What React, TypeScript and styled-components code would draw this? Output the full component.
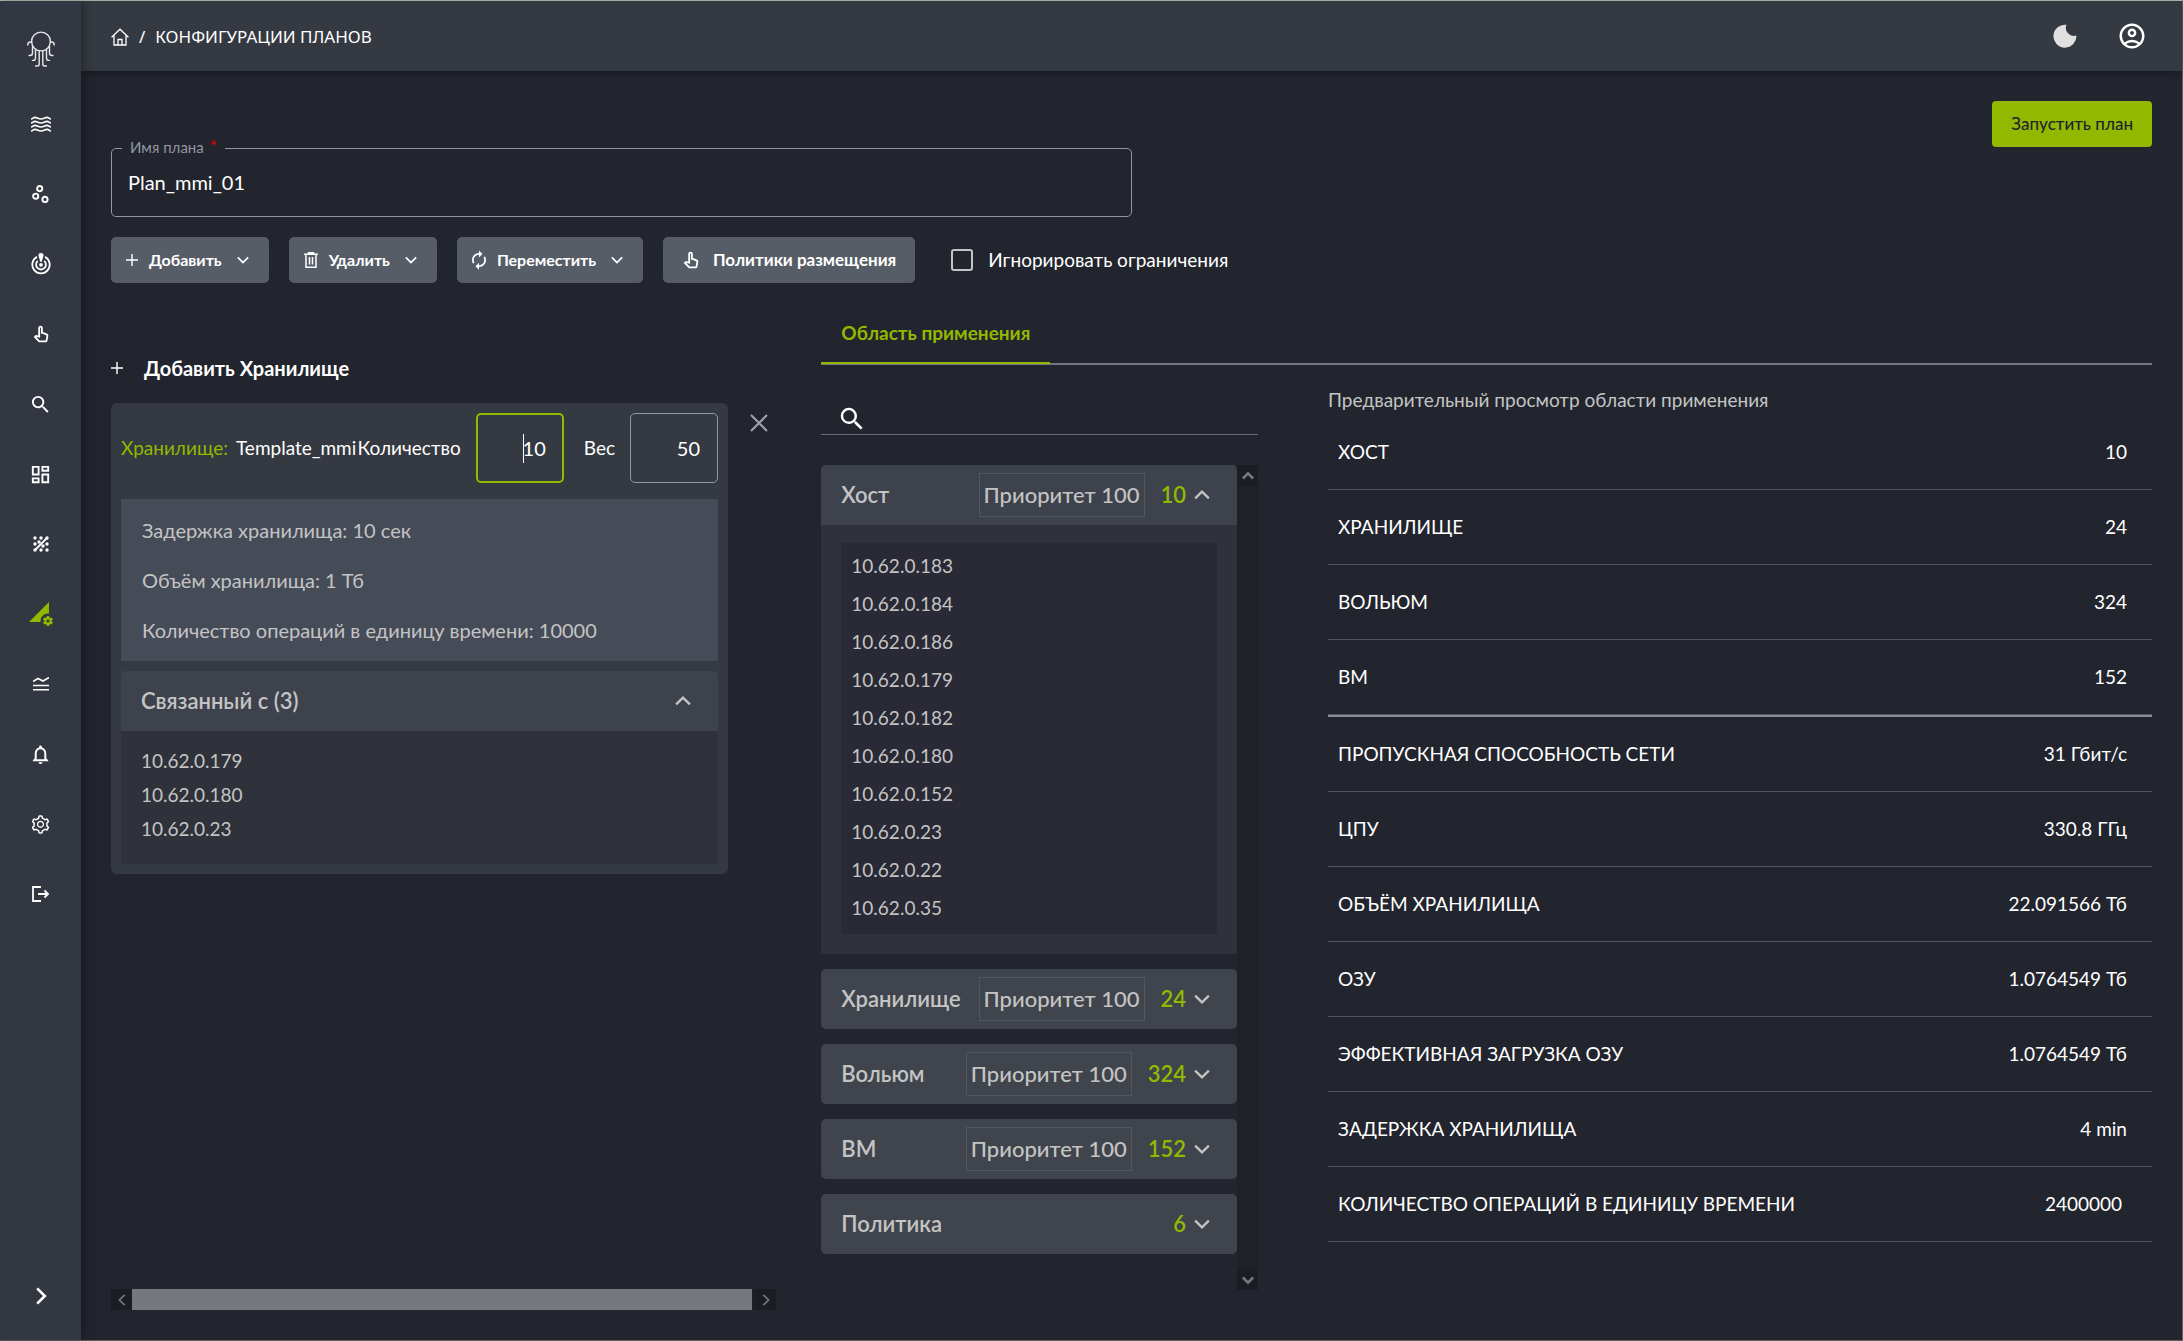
import React from "react";
import styled, { createGlobalStyle, css } from "styled-components";
import {
  MdOutlinePanToolAlt,
  MdSearch,
  MdOutlineDashboard,
  MdPermDataSetting,
  MdNotificationsNone,
  MdOutlineAccountCircle,
} from "react-icons/md";
import { AiOutlineSetting } from "react-icons/ai";

const c = {
  page: "#22252e",
  bar: "#353941",
  side: "#333741",
  card: "#353941",
  accent: "#93b800",
  btn: "#575d67",
  text: "#ffffff",
  soft: "#c4c4c4",
  dim: "#9496a1",
  line: "#52565e",
};

const Global = createGlobalStyle`
  *, *::before, *::after { box-sizing: border-box; }
  body { margin: 0; background: ${c.page}; color: ${c.text}; font: 19px/24px Lato, "Open Sans", sans-serif; }
  button, input { font: inherit; color: inherit; }
  button { border: 0; padding: 0; background: none; cursor: pointer; }
  ul { list-style: none; margin: 0; padding: 0; }
`;

const Page = styled.div`
  display: grid;
  grid-template-columns: 81px minmax(0, 1fr);
  min-height: 100vh;
  border: 1px solid #5f6165;
  border-left: 0;
  border-top-color: #b9c0b9;
`;

const Sidebar = styled.nav`
  display: flex;
  flex-direction: column;
  align-items: center;
  padding: 23px 0 35px;
  background: ${c.side};
  box-shadow: 2px 0 10px rgba(0, 0, 0, 0.35);
  z-index: 1;
`;

const SideLink = styled.a<{ $active?: boolean }>`
  display: flex;
  align-items: center;
  justify-content: center;
  width: 50px;
  height: 50px;
  margin-bottom: 20px;
  color: ${(p) => (p.$active ? c.accent : c.text)};
`;

const HomeLink = styled(SideLink)`
  margin-bottom: 25px;
`;

const Expand = styled.button`
  display: flex;
  margin-top: auto;
`;

const Main = styled.div`
  display: flex;
  flex-direction: column;
  min-width: 0;
`;

const Header = styled.header`
  display: flex;
  align-items: center;
  justify-content: space-between;
  height: 70px;
  padding: 0 35px 0 30px;
  background: ${c.bar};
  box-shadow: 0 2px 8px rgba(0, 0, 0, 0.35);
`;

const Crumbs = styled.div`
  display: flex;
  align-items: center;
  gap: 10px;
  padding-top: 2px;
  font: 17px/24px "Noto Sans", sans-serif;

  a { display: flex; color: inherit; }
`;

const Tools = styled.div`
  display: flex;
  align-items: center;
  gap: 40px;

  button { display: flex; }
`;

const Content = styled.main`
  flex: 1;
  display: flex;
  flex-direction: column;
  padding: 30px 30px;
`;

const LaunchRow = styled.div`
  display: flex;
  justify-content: flex-end;
`;

const Launch = styled.button`
  height: 46px;
  padding: 0 19px;
  border-radius: 4px;
  background: ${c.accent};
  color: #22252e;
  font-size: 17px;
  font-weight: 500;
`;

const NameField = styled.fieldset`
  width: 50%;
  height: 70px;
  margin: 0;
  padding: 0;
  border: 1px solid ${c.dim};
  border-radius: 5px;

  legend {
    margin-left: 10px;
    padding: 0 8px 3px;
    font-size: 15px;
    line-height: 0;
    color: ${c.dim};
  }
  legend span { color: #e00000; margin-left: 6px; font-size: 17px; }
  input {
    width: 100%;
    height: 63px;
    padding: 0 16px;
    border: 0;
    outline: 0;
    background: none;
    font-size: 20px;
  }
`;

const Actions = styled.div`
  display: flex;
  align-items: center;
  gap: 20px;
  margin: 20px 0;
`;

const ActionButton = styled.button`
  display: flex;
  align-items: center;
  justify-content: space-between;
  gap: 11px;
  height: 46px;
  padding: 0 20px 0 15px;
  border-radius: 5px;
  background: ${c.btn};
  font-size: 16px;
  font-weight: 700;

  svg:last-child { margin-left: 4px; }
`;

const PolicyButton = styled(ActionButton)`
  padding: 0 19px 0 17px;
  font-size: 17px;
`;

const Check = styled.label`
  display: flex;
  align-items: center;
  gap: 15px;
  margin-left: 16px;

  input {
    appearance: none;
    width: 22px;
    height: 22px;
    margin: 0;
    border: 2px solid ${c.soft};
    border-radius: 3px;
  }
`;

const Columns = styled.div`
  flex: 1;
  display: grid;
  grid-template-columns: minmax(0, 1fr) minmax(0, 2fr);
  gap: 45px;
`;

const Left = styled.section`
  display: flex;
  flex-direction: column;
  padding-top: 50px;
`;

const AddStorage = styled.button`
  display: flex;
  align-items: center;
  gap: 21px;
  align-self: flex-start;
  height: 30px;
  margin-bottom: 20px;
  font-size: 20px;
  font-weight: 700;
`;

const CardRow = styled.div`
  display: flex;
  align-items: flex-start;
  gap: 22px;
`;

const Card = styled.article`
  width: 617px;
  padding: 10px;
  border-radius: 6px;
  background: ${c.card};
`;

const Close = styled.button`
  display: flex;
  margin-top: 11px;
  color: #a0a2ac;
`;

const CardHead = styled.div`
  display: flex;
  align-items: center;
  margin-bottom: 16px;
  white-space: nowrap;
`;

const StorageName = styled.span`
  flex: 1;

  b { font-weight: 400; color: ${c.accent}; margin-right: 8px; }
`;

const Amount = styled.label<{ $focus?: boolean }>`
  position: relative;
  display: flex;
  align-items: center;
  gap: 15px;
  margin-left: ${(p) => (p.$focus ? "0" : "20px")};

  input {
    width: 88px;
    height: 70px;
    padding: 0 17px;
    border: 1px solid ${c.dim};
    border-radius: 5px;
    outline: 0;
    background: none;
    text-align: right;
    font-size: 20px;
    ${(p) => p.$focus && css`border: 2px solid ${c.accent}; padding: 0 16px;`}
  }
`;

const Caret = styled.i`
  position: absolute;
  right: 40px;
  width: 1px;
  height: 29px;
  background: ${c.text};
`;

const Facts = styled.ul`
  display: grid;
  gap: 26px;
  padding: 19px 21px;
  margin-bottom: 10px;
  background: #464b58;
  color: ${c.soft};
  font-size: 20px;
`;

const PanelHead = styled.button<{ $open?: boolean }>`
  display: flex;
  align-items: center;
  width: 100%;
  height: 60px;
  padding: 0 27px 0 20px;
  border-radius: ${(p) => (p.$open ? "5px 5px 0 0" : "5px")};
  background: ${(p) => (p.$open ? "#3d424d" : "#40444c")};
  color: ${c.soft};
  font-size: 22px;
  font-weight: 600;
`;

const PanelTitle = styled.span`
  flex: 1;
  text-align: left;
`;

const Priority = styled.span`
  padding: 9px 4px;
  margin-right: 16px;
  border: 1px solid ${c.line};
  font-weight: 500;
`;

const Count = styled.span`
  margin-right: 8px;
  color: ${c.accent};
`;

const Linked = styled.ul`
  padding: 13px 20px 18px;
  background: #2f323a;
  color: ${c.soft};
  line-height: 34px;
`;

const ScrollX = styled.div`
  display: flex;
  margin-top: auto;
  height: 21px;
  background: #1d1e26;
`;

const ScrollStep = styled.button`
  display: flex;
  align-items: center;
  justify-content: center;
  width: 21px;
  height: 21px;
  background: #1c1c24;
  color: #77787d;
`;

const ThumbX = styled.div`
  flex: 1;
  margin-right: 3px;
  background: #77787d;
`;

const Right = styled.section`
  display: flex;
  flex-direction: column;
`;

const Tabs = styled.div`
  display: flex;
  height: 62px;
  border-bottom: 2px solid #747881;
`;

const Tab = styled.button`
  height: 61px;
  padding: 0 20px;
  border-bottom: 2px solid ${c.accent};
  color: ${c.accent};
  font-weight: 700;
`;

const Scope = styled.div`
  flex: 1;
  display: grid;
  grid-template-columns: minmax(0, 53fr) minmax(0, 100fr);
  gap: 70px;
`;

const Picker = styled.div`
  display: flex;
  flex-direction: column;
  padding-bottom: 20px;
`;

const SearchBox = styled.label`
  display: flex;
  align-items: flex-end;
  height: 70px;
  padding: 0 0 0 16px;
  border-bottom: 1px solid #6a6d79;

  input {
    flex: 1;
    min-width: 0;
    height: 34px;
    border: 0;
    outline: 0;
    background: none;
  }
`;

const ListArea = styled.div`
  flex: 1;
  display: flex;
  margin-top: 30px;
`;

const List = styled.div`
  flex: 1;
  display: flex;
  flex-direction: column;
  gap: 15px;
`;

const ScrollY = styled.div`
  display: flex;
  flex-direction: column;
  justify-content: space-between;
  width: 21px;
  background: #1f2129;
`;

const HostBody = styled.div`
  padding: 18px 20px 20px;
  background: #2f323a;
`;

const Hosts = styled.ul`
  padding: 4px 10px 7px;
  background: #292a35;
  color: ${c.soft};
  line-height: 38px;
`;

const Preview = styled.div`
  padding-top: 20px;
`;

const PreviewTitle = styled.h2`
  margin: 0;
  font-size: 19px;
  line-height: 30px;
  font-weight: 400;
  color: ${c.soft};
`;

const Table = styled.table`
  width: 100%;
  border-spacing: 0;

  th, td {
    padding: 25px 25px 25px 10px;
    border-bottom: 1px solid ${c.line};
    font-weight: 400;
    text-align: left;
  }
  td { text-align: right; }
  tbody + tbody tr:first-child > * { border-top: 2px solid #868c98; }
`;

const Chevron = ({ dir = "down", size = 14, w = 2 }: { dir?: string; size?: number; w?: number }) => {
  const d: Record<string, string> = {
    down: "M1 4l6 6 6-6",
    up: "M1 10l6-6 6 6",
    left: "M10 1L4 7l6 6",
    right: "M4 1l6 6-6 6",
  };
  return (
    <svg width={size} height={size} viewBox="0 0 14 14" fill="none" stroke="currentColor" strokeWidth={w}>
      <path d={d[dir]} />
    </svg>
  );
};

const Plus = () => (
  <svg width="12" height="12" viewBox="0 0 12 12" stroke="currentColor" strokeWidth="1.4">
    <path d="M6 0v12M0 6h12" />
  </svg>
);

const Logo = () => (
  <svg width="28" height="36" viewBox="0 0 28 36" fill="none" stroke="#e8e8e8" strokeWidth="1.4" strokeLinecap="round">
    <circle cx="14" cy="10.5" r="9.4" />
    <path d="M.8 14c0-2 .9-3 2.400-3h1.500M27.200 14c0-2-.9-3-2.400-3h-1.500M5.500 15.500v6.500c0 1.700-.8 2.500-2.400 2.500H2M22.500 15.500v6.500c0 1.700.8 2.500 2.400 2.500H26M8.500 19v8c0 1.600-.7 2.400-2 2.400h-1M19.500 19v8c0 1.600.7 2.400 2 2.400h1M12.200 20.500v12.500c0 1.300-.6 2-1.800 2H8.600M15.800 20.500v12.500c0 1.300.6 2 1.800 2h1.800" />
  </svg>
);

const Waves = () => (
  <svg width="20" height="16" viewBox="0 0 20 16" fill="none" stroke="currentColor" strokeWidth="1.600">
    {[2, 6, 10, 14].map((y) => (
      <path key={y} d={`M0 ${y + 1}c2 0 2-1.600 4-1.600s3 1.600 6 1.600 4-1.600 6-1.600 2 1.600 4 1.600`} />
    ))}
  </svg>
);

const Clusters = () => (
  <svg width="17" height="18" viewBox="0 0 17 18" fill="none" stroke="currentColor" strokeWidth="1.900">
    <circle cx="7.700" cy="3.600" r="2.600" />
    <circle cx="3.700" cy="11.200" r="2.600" />
    <circle cx="13" cy="14.400" r="2.600" />
  </svg>
);

const Target = () => (
  <svg width="20" height="22" viewBox="0 0 20 22" fill="none" stroke="currentColor" strokeWidth="1.800">
    <path d="M6 3.900A8.700 8.700 0 1 0 14 3.900" />
    <path d="M6.800 7.900A4.900 4.900 0 1 0 13.200 7.900" />
    <circle cx="10" cy="11.800" r="1.900" fill="currentColor" stroke="none" />
    <path d="M7.400 2.200a2.600 2.200 0 0 1 5.200 0L10.800 8.800H9.200z" fill="currentColor" stroke="none" />
  </svg>
);

const DotLine = () => (
  <svg width="16" height="16" viewBox="0 0 16 16" fill="currentColor">
    {[[2, 2], [8, 2], [2, 8], [14, 8], [8, 14], [14, 14], [14, 2], [2, 14], [6, 6], [10, 10]].map(([x, y]) => (
      <circle key={`${x}-${y}`} cx={x} cy={y} r="1.700" />
    ))}
    <path d="M2 14L14 2" stroke="currentColor" strokeWidth="1.800" />
  </svg>
);

const Approx = () => (
  <svg width="16" height="14" viewBox="0 0 16 14" fill="none" stroke="currentColor" strokeWidth="1.600">
    <path d="M0 4.500L5 1.500l5 2.500 6-3.500M0 8.500h16M0 12.800h16" />
  </svg>
);

const Exit = () => (
  <svg width="18" height="16" viewBox="0 0 18 16" fill="none" stroke="currentColor" strokeWidth="1.800">
    <path d="M9 1H1v14h8M6 8h10M12.500 4.500L16 8l-3.500 3.500" />
  </svg>
);

const Home = () => (
  <svg width="18" height="18" viewBox="0 0 18 18" fill="none" stroke="currentColor" strokeWidth="1.300">
    <path d="M.6 9.200L9 1.200l8.400 8M3 7.500v9.500h12V7.500M7 17v-5.500h4V17" />
  </svg>
);

const Bin = () => (
  <svg width="14" height="16" viewBox="0 0 14 16" fill="none" stroke="currentColor" strokeWidth="1.500">
    <path d="M0 2.200h14M4.500 2V.8h5V2M2 2.500v12.700h10V2.500M5.500 5v7.500M8.500 5v7.500" />
  </svg>
);

const Cycle = () => (
  <svg width="14" height="20" viewBox="4 1 16 22" fill="currentColor">
    <path d="M12 6v3l4-4-4-4v3c-4.420 0-8 3.580-8 8 0 1.570.46 3.030 1.240 4.260L6.700 14.800c-.45-.83-.7-1.790-.7-2.800 0-3.310 2.690-6 6-6zm6.760 1.740L17.300 9.200c.44.840.7 1.790.7 2.800 0 3.310-2.690 6-6 6v-3l-4 4 4 4v-3c4.420 0 8-3.580 8-8 0-1.570-.46-3.030-1.240-4.260z" />
  </svg>
);

const Moon = () => (
  <svg width="24" height="24" viewBox="0 0 24 24" fill="#e0e0e0">
    <path d="M13.500.8a8 8 0 0 0 9.900 10.700A11.500 11.500 0 1 1 13.500.8z" />
  </svg>
);

const Cross = () => (
  <svg width="18" height="18" viewBox="0 0 18 18" stroke="currentColor" strokeWidth="2">
    <path d="M1 1l16 16M17 1L1 17" />
  </svg>
);

const nav: { label: string; icon: React.ReactNode; active?: boolean }[] = [
  { label: "Потоки", icon: <Waves /> },
  { label: "Кластеры", icon: <Clusters /> },
  { label: "Мониторинг", icon: <Target /> },
  { label: "Политики", icon: <MdOutlinePanToolAlt size={22} /> },
  { label: "Поиск", icon: <MdSearch size={23} /> },
  { label: "Панели", icon: <MdOutlineDashboard size={23} /> },
  { label: "Графики", icon: <DotLine /> },
  { label: "Планы", icon: <MdPermDataSetting size={24} />, active: true },
  { label: "Сравнение", icon: <Approx /> },
  { label: "Уведомления", icon: <MdNotificationsNone size={23} /> },
  { label: "Настройки", icon: <AiOutlineSetting size={21} /> },
  { label: "Выход", icon: <Exit /> },
];

const hosts = ["183", "184", "186", "179", "182", "180", "152", "23", "22", "35"];

const scopes = [
  { name: "Хранилище", count: 24, priority: true },
  { name: "Вольюм", count: 324, priority: true },
  { name: "ВМ", count: 152, priority: true },
  { name: "Политика", count: 6, priority: false },
];

const objects = [["ХОСТ", "10"], ["ХРАНИЛИЩЕ", "24"], ["ВОЛЬЮМ", "324"], ["ВМ", "152"]];
const resources = [
  ["ПРОПУСКНАЯ СПОСОБНОСТЬ СЕТИ", "31 Гбит/с"],
  ["ЦПУ", "330.8 ГГц"],
  ["ОБЪЁМ ХРАНИЛИЩА", "22.091566 Тб"],
  ["ОЗУ", "1.0764549 Тб"],
  ["ЭФФЕКТИВНАЯ ЗАГРУЗКА ОЗУ", "1.0764549 Тб"],
  ["ЗАДЕРЖКА ХРАНИЛИЩА", "4 min"],
  ["КОЛИЧЕСТВО ОПЕРАЦИЙ В ЕДИНИЦУ ВРЕМЕНИ", "2400000\u00a0"],
];

const Rows = ({ data }: { data: string[][] }) => (
  <tbody>
    {data.map(([k, v]) => (
      <tr key={k}>
        <th scope="row">{k}</th>
        <td>{v}</td>
      </tr>
    ))}
  </tbody>
);

export default function App() {
  return (
    <>
      <Global />
      <Page>
        <Sidebar>
          <HomeLink href="#home" aria-label="Главная"><Logo /></HomeLink>
          {nav.map((n) => (
            <SideLink key={n.label} href="#" aria-label={n.label} $active={n.active}>{n.icon}</SideLink>
          ))}
          <Expand aria-label="Развернуть"><Chevron dir="right" size={18} w={2} /></Expand>
        </Sidebar>
        <Main>
          <Header>
            <Crumbs>
              <a href="#home" aria-label="Главная"><Home /></a>
              <span>/</span>
              <span>КОНФИГУРАЦИИ ПЛАНОВ</span>
            </Crumbs>
            <Tools>
              <button aria-label="Тема"><Moon /></button>
              <button aria-label="Профиль"><MdOutlineAccountCircle size={30} /></button>
            </Tools>
          </Header>
          <Content>
            <LaunchRow><Launch>Запустить план</Launch></LaunchRow>
            <NameField>
              <legend><label htmlFor="plan">Имя плана<span>*</span></label></legend>
              <input id="plan" defaultValue="Plan_mmi_01" />
            </NameField>
            <Actions>
              <ActionButton><Plus />Добавить<Chevron size={12} w={2} /></ActionButton>
              <ActionButton><Bin />Удалить<Chevron size={12} w={2} /></ActionButton>
              <ActionButton><Cycle />Переместить<Chevron size={12} w={2} /></ActionButton>
              <PolicyButton><MdOutlinePanToolAlt size={22} /><span>Политики размещения</span></PolicyButton>
              <Check><input type="checkbox" />Игнорировать ограничения</Check>
            </Actions>
            <Columns>
              <Left>
                <AddStorage><Plus />Добавить Хранилище</AddStorage>
                <CardRow>
                  <Card>
                    <CardHead>
                      <StorageName><b>Хранилище:</b>Template_mmi</StorageName>
                      <Amount $focus>Количество<input defaultValue="10" /><Caret /></Amount>
                      <Amount>Вес<input defaultValue="50" /></Amount>
                    </CardHead>
                    <Facts>
                      <li>Задержка хранилища: 10 сек</li>
                      <li>Объём хранилища: 1 Тб</li>
                      <li>Количество операций в единицу времени: 10000</li>
                    </Facts>
                    <PanelHead $open>
                      <PanelTitle>Связанный с (3)</PanelTitle>
                      <Chevron dir="up" size={16} />
                    </PanelHead>
                    <Linked>
                      <li>10.62.0.179</li>
                      <li>10.62.0.180</li>
                      <li>10.62.0.23</li>
                    </Linked>
                  </Card>
                  <Close aria-label="Удалить хранилище"><Cross /></Close>
                </CardRow>
                <ScrollX>
                  <ScrollStep aria-label="Влево"><Chevron dir="left" size={12} /></ScrollStep>
                  <ThumbX />
                  <ScrollStep aria-label="Вправо"><Chevron dir="right" size={12} /></ScrollStep>
                </ScrollX>
              </Left>
              <Right>
                <Tabs><Tab>Область применения</Tab></Tabs>
                <Scope>
                  <Picker>
                    <SearchBox>
                      <MdSearch size={30} />
                      <input type="search" aria-label="Поиск" />
                    </SearchBox>
                    <ListArea>
                      <List>
                        <div>
                          <PanelHead $open>
                            <PanelTitle>Хост</PanelTitle>
                            <Priority>Приоритет 100</Priority>
                            <Count>10</Count>
                            <Chevron dir="up" size={16} />
                          </PanelHead>
                          <HostBody>
                            <Hosts>{hosts.map((h) => <li key={h}>10.62.0.{h}</li>)}</Hosts>
                          </HostBody>
                        </div>
                        {scopes.map((s) => (
                          <PanelHead key={s.name}>
                            <PanelTitle>{s.name}</PanelTitle>
                            {s.priority && <Priority>Приоритет 100</Priority>}
                            <Count>{s.count}</Count>
                            <Chevron size={16} />
                          </PanelHead>
                        ))}
                      </List>
                      <ScrollY>
                        <ScrollStep aria-label="Вверх"><Chevron dir="up" size={12} w={3} /></ScrollStep>
                        <ScrollStep aria-label="Вниз"><Chevron size={12} w={3} /></ScrollStep>
                      </ScrollY>
                    </ListArea>
                  </Picker>
                  <Preview>
                    <PreviewTitle>Предварительный просмотр области применения</PreviewTitle>
                    <Table>
                      <Rows data={objects} />
                      <Rows data={resources} />
                    </Table>
                  </Preview>
                </Scope>
              </Right>
            </Columns>
          </Content>
        </Main>
      </Page>
    </>
  );
}
